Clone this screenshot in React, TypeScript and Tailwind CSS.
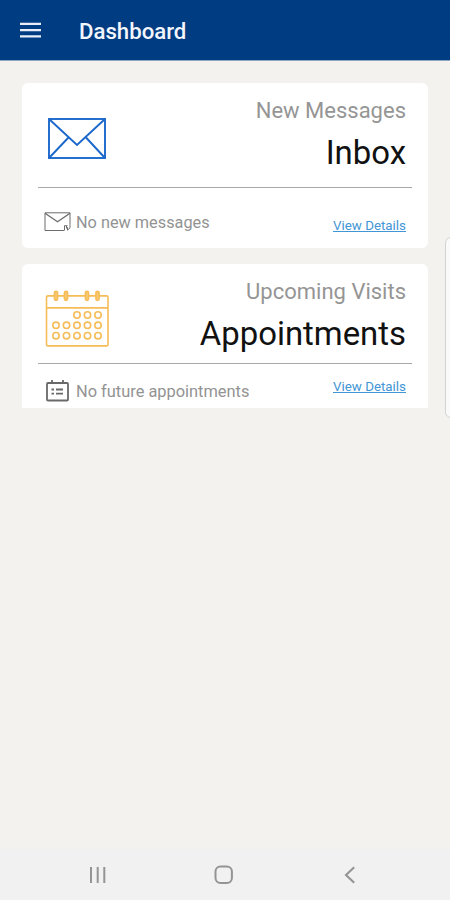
import type { ReactNode } from 'react';

function EnvelopeIcon() {
  return (
    <svg width="60" height="44" viewBox="0 0 60 44" fill="none" stroke="#1b68cc" strokeWidth="1.9">
      <rect x="2" y="2" width="56" height="39" />
      <path d="M2 2l28 26L58 2M2 41l19.5-20.5M58 41L39 20.5" />
    </svg>
  );
}

const dots = [
  [36, 27], [46.5, 27], [57, 27],
  [15, 37.3], [25.5, 37.3], [36, 37.3], [46.5, 37.3], [57, 37.3],
  [15, 47.7], [25.5, 47.7], [36, 47.7], [46.5, 47.7], [57, 47.7],
];

function CalendarIcon() {
  return (
    <svg width="70" height="62" viewBox="4 0 70 62" fill="none" stroke="#f6bc57" strokeWidth="1.6">
      <rect x="5.5" y="7.9" width="61.5" height="50" rx="1.5" />
      <path d="M5.5 19.9H67" />
      {[15, 25, 46, 56.5].map((x) => (
        <rect key={x} x={x - 1.6} y="3.4" width="3.2" height="9" rx="1.6" fill="#f8ca74" />
      ))}
      {dots.map(([x, y]) => (
        <circle key={`${x}-${y}`} cx={x} cy={y} r="3.2" />
      ))}
    </svg>
  );
}

function SmallMailIcon() {
  return (
    <svg width="28" height="20" viewBox="0 0 28 20" fill="none" stroke="#6c6c6c" strokeWidth="1">
      <path d="M20 18.5H1V.8h25v11.7" />
      <path d="M1 1.3l12.5 8.5L26 1.3" strokeWidth="1.3" />
      <path d="M20.5 18.5v-4.8h3M22.5 14v2.5M26 12.5v3.3l-2.5 2.4v-3" />
    </svg>
  );
}

function SmallCalendarIcon() {
  return (
    <svg width="24" height="22" viewBox="0 0 24 22" fill="none" stroke="#696969" strokeWidth="1.8">
      <rect x="2" y="3" width="21" height="17.5" rx="1" />
      <path d="M7 0v4M18 0v4M6.5 9.5H9M11 9.5h7M6.5 13.7H9M11 13.7h7" />
    </svg>
  );
}

type CardProps = {
  icon: ReactNode;
  label: string;
  title: string;
  className: string;
  children: ReactNode;
};

function Card({ icon, label, title, className, children }: CardProps) {
  return (
    <section className={`flex flex-col bg-white px-4 ${className}`}>
      <div className="flex flex-1 justify-between border-b border-[#a8a8a8] pr-1.5">
        {icon}
        <div className="flex flex-col items-end whitespace-nowrap pt-[13px]">
          <p className="text-[22px] leading-[30px] text-[#959595]">{label}</p>
          <h2 className="mt-[7px] text-[32.9px] leading-[40px] text-[#111]">{title}</h2>
        </div>
      </div>
      {children}
    </section>
  );
}

export default function App() {
  return (
    <div className="flex h-[900px] w-[450px] flex-col overflow-hidden bg-[#f3f2ee] font-[Roboto,sans-serif]">
      <header className="flex h-[61px] shrink-0 items-center border-b border-[#8fa6c2] bg-[#003c82] pl-5">
        <svg width="21" height="16" viewBox="0 0 21 16" fill="#e8edf8">
          <path d="M0 .7h21v2.2H0zM0 7h21v2.2H0zM0 13.3h21v2.2H0z" />
        </svg>
        <h1 className="ml-[38px] pt-0.5 text-[22.2px] leading-8 font-medium text-[#f3f6fc]">Dashboard</h1>
      </header>

      <main className="relative flex flex-1 flex-col gap-4 px-[22px] pt-[22px]">
        <Card
          icon={<div className="pl-[9px] pt-[34px]"><EnvelopeIcon /></div>}
          label="New Messages"
          title="Inbox"
          className="h-[165px] rounded-md"
        >
          <div className="flex h-[60px] items-start justify-between pl-[6px] pr-1.5">
            <div className="flex items-start pt-[24px]">
              <SmallMailIcon />
              <span className="ml-1 text-[16.3px] leading-[22px] text-[#939393]">No new messages</span>
            </div>
            <a className="mt-[28px] text-[13.35px] leading-[20px] text-[#4396d6] underline">View Details</a>
          </div>
        </Card>

        <Card
          icon={<div className="pl-[7px] pt-[24px]"><CalendarIcon /></div>}
          label="Upcoming Visits"
          title="Appointments"
          className="h-[144px] rounded-t-md"
        >
          <div className="flex h-[44px] items-start justify-between pl-[7px] pr-1.5">
            <div className="flex items-start pt-[16px]">
              <SmallCalendarIcon />
              <span className="ml-[7px] pt-px text-[16.4px] leading-[22px] text-[#939393]">No future appointments</span>
            </div>
            <a className="mt-[13px] text-[13.35px] leading-[20px] text-[#4396d6] underline">View Details</a>
          </div>
        </Card>

        {/* edge panel handle */}
        <div className="absolute -right-2 top-[176px] h-[181px] w-[13px] rounded-md border border-[#d3d3d3] bg-[#fafafa]" />
      </main>

      <nav className="flex h-[51px] shrink-0 items-center bg-[#f1f1f1] pl-[89px]">
        <svg width="18" height="18" viewBox="0 0 18 18" stroke="#949494" strokeWidth="2">
          <path d="M2 1v16M8.7 1v16M15.3 1v16" />
        </svg>
        <svg className="ml-[107px]" width="20" height="20" viewBox="0 0 20 20" fill="none" stroke="#949494" strokeWidth="2">
          <rect x="1.5" y="1.5" width="16.4" height="16.4" rx="5" />
        </svg>
        <svg className="ml-[110px]" width="12" height="18" viewBox="0 0 12 18" fill="none" stroke="#949494" strokeWidth="2.1">
          <path d="M10.2 1.2L2 9l8.2 7.8" />
        </svg>
      </nav>
    </div>
  );
}
